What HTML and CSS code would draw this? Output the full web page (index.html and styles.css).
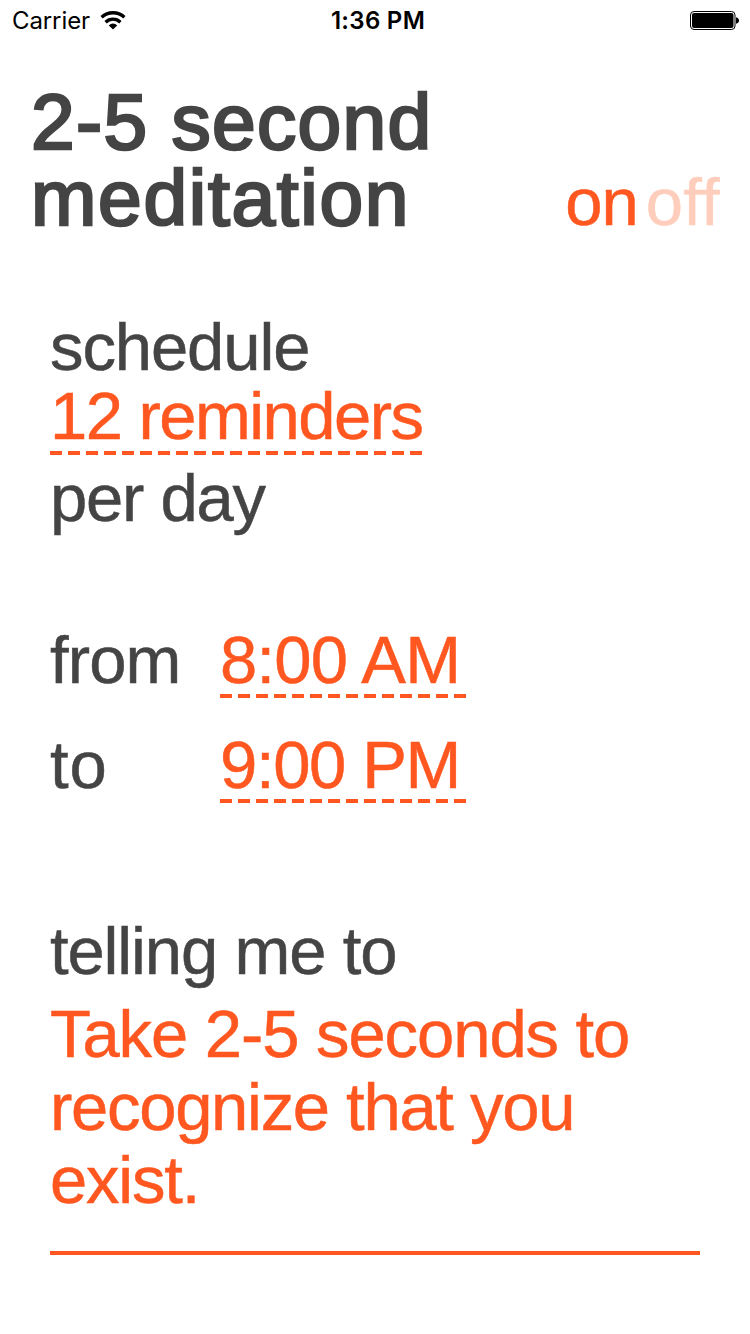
FILE: index.html
```html
<!DOCTYPE html>
<html lang="en">
<head>
<meta charset="utf-8">
<title>2-5 second meditation</title>
<link rel="stylesheet" href="styles.css">
</head>
<body>
<div class="status">
  <div class="carrier"><span class="carrier-name">Carrier</span>
    <svg class="wifi" width="26" height="20" viewBox="0 0 26 20"><g fill="none" stroke="#000" stroke-width="3.300"><path d="M1.6 6.3A16.5 16.5 0 0 1 24.4 6.3"/><path d="M5.6 11.2A10.6 10.6 0 0 1 20.4 11.2"/></g><path d="M13 18.5L8.800 14.4A5.8 5.8 0 0 1 17.200 14.4Z"/></svg>
  </div>
  <div class="clock">1:36 PM</div>
  <svg class="battery" width="49" height="19" viewBox="0 0 49 19"><rect x=".5" y=".5" width="44.500" height="18" rx="3.5" fill="none" stroke="#000"/><rect x="2" y="2" width="41.500" height="15" rx="2"/><path d="M46 6.200q3 .8 3 3.300t-3 3.300z"/></svg>
</div>
<header class="header">
  <h1 class="title"><span class="line t1">2-5 second</span><span class="line t2">meditation</span></h1>
  <div class="toggle"><span class="on">on</span><span class="off">off</span></div>
</header>
<main class="main">
  <section class="schedule">
    <div class="row w1">schedule</div>
    <div class="field count">12 reminders</div>
    <div class="row w3">per day</div>
  </section>
  <section class="times">
    <div class="w4">from</div><div class="field time w5">8:00 AM</div>
    <div class="w6">to</div><div class="field time w7">9:00 PM</div>
  </section>
  <section class="message">
    <div class="prompt">telling me to</div>
    <div class="text"><span class="line w9">Take 2-5 seconds to</span><span class="line w10">recognize that you</span><span class="line w11">exist.</span></div>
  </section>
</main>
</body>
</html>
```
FILE: styles.css
```css
* { box-sizing: border-box; }
body { margin: 0; width: 750px; height: 1334px; overflow: hidden; background: #fff; color: #444; font-family: "Liberation Sans", Arial, sans-serif; font-size: 67px; letter-spacing: -1px; white-space: nowrap; -webkit-text-stroke-width: .5px; }
.status { height: 40px; display: grid; grid-template-columns: 1fr auto 1fr; padding: 1px 11px 0 12px; align-items: center; color: #000; font: 24px/40px Inter, sans-serif; letter-spacing: .4px; -webkit-text-stroke-width: 0; }
.carrier { display: flex; align-items: center; gap: 10px; letter-spacing: -.1px; }
.wifi { margin-top: -1px; }
.clock { font-weight: 600; padding-left: 5px; letter-spacing: .3px; }
.battery { justify-self: end; margin-top: -2px; }
.header { height: 270px; padding: 44px 30px 0 31px; display: flex; justify-content: space-between; align-items: flex-start; }
.title { margin: 0; font-size: 78.500px; line-height: 76px; font-weight: 400; -webkit-text-stroke: 2.600px #444; }
.line { display: block; }
.t1 { letter-spacing: 1.300px; }
.t2 { letter-spacing: 1.700px; }
.toggle { display: flex; gap: 8px; padding-top: 80px; line-height: 76px; color: #ff571f; }
.on { letter-spacing: -1px; }
.off { color: #ffcdbb; letter-spacing: .3px; }
.main { padding: 0 50px; }
.schedule { height: 312px; line-height: 76px; }
.row { height: 76px; }
.field { height: 69px; line-height: 60px; color: #ff571f; background: repeating-linear-gradient(90deg, #ff571f 0 12px, transparent 12px 18px) 0 100% / 100% 4px no-repeat; }
.count { width: 372px; letter-spacing: -1.550px; }
.time { width: 246px; height: 76px; line-height: 75px; }
.w1 { letter-spacing: -1.100px; line-height: 74px; }
.w3 { letter-spacing: -1.250px; padding-top: 5px; }
.w4 { letter-spacing: -.9px; }
.w5 { letter-spacing: -.8px; }
.w6 { letter-spacing: 1px; }
.w7 { letter-spacing: -1.350px; }
.times { height: 290px; display: grid; grid-template-columns: 170px max-content; grid-auto-rows: 105px; line-height: 76px; }
.message { height: 343px; line-height: 76px; border-bottom: 4px solid #ff571f; }
.prompt { height: 85px; padding-top: 1px; letter-spacing: -1.150px; }
.text { line-height: 73px; color: #ff571f; }
.w9 { letter-spacing: -1.070px; }
.w10 { letter-spacing: -1.300px; }
.w11 { letter-spacing: -1.200px; }
```
